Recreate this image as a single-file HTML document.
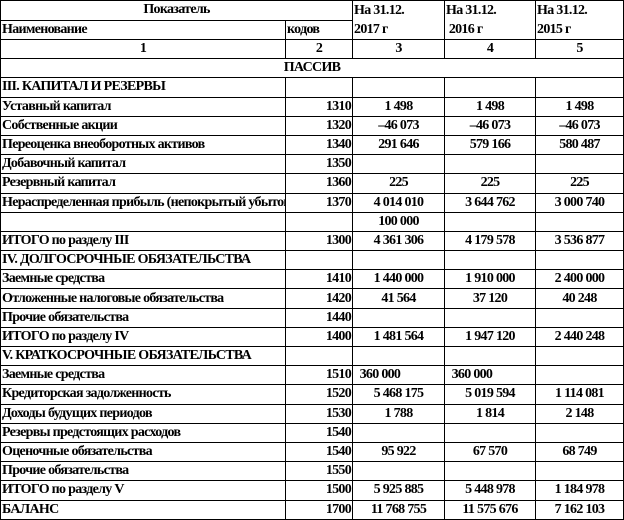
<!DOCTYPE html>
<html><head><meta charset="utf-8"><style>
html,body{margin:0;padding:0;background:#fff;}
table{border-collapse:collapse;table-layout:fixed;width:623px;font-family:"Liberation Serif",serif;font-size:14px;letter-spacing:-0.7px;color:#000;}
td{border:1px solid #000;height:18.2px;padding:0 1px;white-space:nowrap;overflow:hidden;font-weight:bold;line-height:16px;}
.c{text-align:center}.r{text-align:right}
</style></head><body>
<table>
<colgroup><col style="width:285px"><col style="width:67px"><col style="width:92px"><col style="width:91px"><col style="width:88px"></colgroup>
<tr><td colspan="2" class="c">Показатель</td><td rowspan="2" style="line-height:19px">На 31.12.<br>2017 г</td><td rowspan="2" style="line-height:19px">На 31.12.<br>&nbsp;2016 г</td><td rowspan="2" style="line-height:19px">На 31.12.<br>2015 г</td></tr>
<tr><td>Наименование</td><td>кодов</td></tr>
<tr><td class="c">1</td><td class="c">2</td><td class="c">3</td><td class="c">4</td><td class="c">5</td></tr>
<tr><td colspan="5" class="c">ПАССИВ</td></tr>
<tr><td>III. КАПИТАЛ И РЕЗЕРВЫ</td><td></td><td></td><td></td><td></td></tr>
<tr><td>Уставный капитал</td><td class="r">1310</td><td class="c">1 498</td><td class="c">1 498</td><td class="c">1 498</td></tr>
<tr><td>Собственные акции</td><td class="r">1320</td><td class="c">–46 073</td><td class="c">–46 073</td><td class="c">–46 073</td></tr>
<tr><td>Переоценка внеоборотных активов</td><td class="r">1340</td><td class="c">291 646</td><td class="c">579 166</td><td class="c">580 487</td></tr>
<tr><td>Добавочный капитал</td><td class="r">1350</td><td></td><td></td><td></td></tr>
<tr><td>Резервный капитал</td><td class="r">1360</td><td class="c">225</td><td class="c">225</td><td class="c">225</td></tr>
<tr><td>Нераспределенная прибыль (непокрытый убыток)</td><td class="r">1370</td><td class="c">4 014 010</td><td class="c">3 644 762</td><td class="c">3 000 740</td></tr>
<tr><td></td><td></td><td class="c">100 000</td><td></td><td></td></tr>
<tr><td>ИТОГО по разделу III</td><td class="r">1300</td><td class="c">4 361 306</td><td class="c">4 179 578</td><td class="c">3 536 877</td></tr>
<tr><td>IV. ДОЛГОСРОЧНЫЕ ОБЯЗАТЕЛЬСТВА</td><td></td><td></td><td></td><td></td></tr>
<tr><td>Заемные средства</td><td class="r">1410</td><td class="c">1 440 000</td><td class="c">1 910 000</td><td class="c">2 400 000</td></tr>
<tr><td>Отложенные налоговые обязательства</td><td class="r">1420</td><td class="c">41 564</td><td class="c">37 120</td><td class="c">40 248</td></tr>
<tr><td>Прочие обязательства</td><td class="r">1440</td><td></td><td></td><td></td></tr>
<tr><td>ИТОГО по разделу IV</td><td class="r">1400</td><td class="c">1 481 564</td><td class="c">1 947 120</td><td class="c">2 440 248</td></tr>
<tr><td>V. КРАТКОСРОЧНЫЕ ОБЯЗАТЕЛЬСТВА</td><td></td><td></td><td></td><td></td></tr>
<tr><td>Заемные средства</td><td class="r">1510</td><td>&nbsp;&nbsp;360 000</td><td>&nbsp;&nbsp;360 000</td><td></td></tr>
<tr><td>Кредиторская задолженность</td><td class="r">1520</td><td class="c">5 468 175</td><td class="c">5 019 594</td><td class="c">1 114 081</td></tr>
<tr><td>Доходы будущих периодов</td><td class="r">1530</td><td class="c">1 788</td><td class="c">1 814</td><td class="c">2 148</td></tr>
<tr><td>Резервы предстоящих расходов</td><td class="r">1540</td><td></td><td></td><td></td></tr>
<tr><td>Оценочные обязательства</td><td class="r">1540</td><td class="c">95 922</td><td class="c">67 570</td><td class="c">68 749</td></tr>
<tr><td>Прочие обязательства</td><td class="r">1550</td><td></td><td></td><td></td></tr>
<tr><td>ИТОГО по разделу V</td><td class="r">1500</td><td class="c">5 925 885</td><td class="c">5 448 978</td><td class="c">1 184 978</td></tr>
<tr><td>БАЛАНС</td><td class="r">1700</td><td class="c">11 768 755</td><td class="c">11 575 676</td><td class="c">7 162 103</td></tr>
</table>
</body></html>
